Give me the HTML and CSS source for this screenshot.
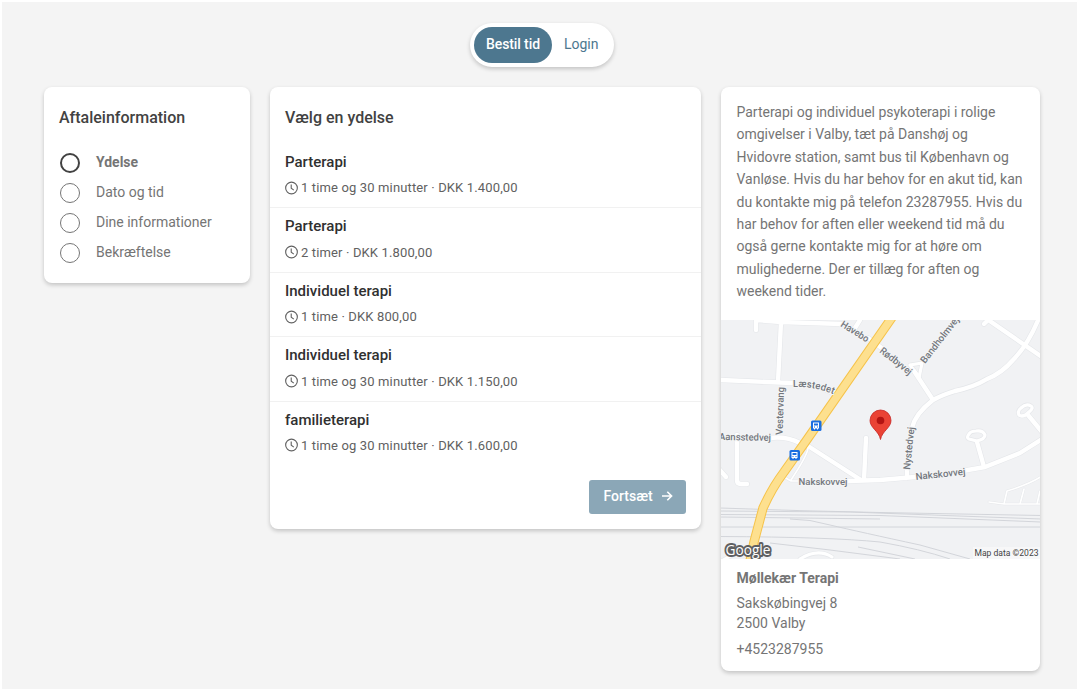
FILE: index.html
```html
<!DOCTYPE html>
<html lang="da">
<head>
<meta charset="utf-8">
<title>Bestil tid</title>
<link rel="stylesheet" href="styles.css">
</head>
<body>
<svg class="defs" aria-hidden="true"><symbol id="clock" viewBox="0 0 14 14"><circle cx="7" cy="7" r="6.3"/><path d="M6.700 3.200V7.300L9.500 9.300"/></symbol></svg>
<nav class="tabs"><a class="tab active">Bestil tid</a><a class="tab">Login</a></nav>
<main class="columns">
  <aside class="card steps">
    <h2>Aftaleinformation</h2>
    <ul>
      <li class="current"><i></i><span>Ydelse</span></li>
      <li><i></i><span>Dato og tid</span></li>
      <li><i></i><span>Dine informationer</span></li>
      <li><i></i><span>Bekræftelse</span></li>
    </ul>
  </aside>
  <section class="card services">
    <h2>Vælg en ydelse</h2>
    <div class="service"><h3>Parterapi</h3><p><svg><use href="#clock"/></svg><span>1 time og 30 minutter · DKK 1.400,00</span></p></div>
    <div class="service"><h3>Parterapi</h3><p><svg><use href="#clock"/></svg><span>2 timer · DKK 1.800,00</span></p></div>
    <div class="service"><h3>Individuel terapi</h3><p><svg><use href="#clock"/></svg><span>1 time · DKK 800,00</span></p></div>
    <div class="service"><h3>Individuel terapi</h3><p><svg><use href="#clock"/></svg><span>1 time og 30 minutter · DKK 1.150,00</span></p></div>
    <div class="service"><h3>familieterapi</h3><p><svg><use href="#clock"/></svg><span>1 time og 30 minutter · DKK 1.600,00</span></p></div>
    <div class="actions"><button><span>Fortsæt</span><svg viewBox="0 0 12 12"><path d="M1 6H10.5M6.3 1.7L10.6 6L6.3 10.3"/></svg></button></div>
  </section>
  <aside class="card about">
    <p class="intro">Parterapi og individuel psykoterapi i rolige omgivelser i Valby, tæt på Danshøj og Hvidovre station, samt bus til København og Vanløse. Hvis du har behov for en akut tid, kan du kontakte mig på telefon 23287955. Hvis du har behov for aften eller weekend tid må du også gerne kontakte mig for at høre om mulighederne. Der er tillæg for aften og weekend tider.</p>
    <svg class="map" viewBox="1 0 319 239">
      <defs>
        <g id="roads">
          <path d="M36 0L61 2L122 4M36 1V10M61 2L58 62M0 60L72 63M98 66L115 74M140 0L135 8M148 18L163 29M17 115V160Q17 164 21 164H27M-1 149L6 157M50 118Q66 116 80 123L88 126L141 160M146 118L144 160M128 161L160 160L195 157M242 151L265 147L300 133L322 119M257 122L264 147M187 150V158M192 108Q195 94 213 80L194 51M213 80Q222 75 235 71Q254 67 267 59Q282 53 293 40Q308 25 319 -2M264 -3L322 37M264 4L272 -4M308 95L322 112"/>
          <path class="narrow" d="M190 45L202 43L199 58M190 45L198 56M257 121L249 119Q246 118 249 114Q251 111 256 111Q263 110 265 115Q265 119 257 121M299 95Q297 91 301 88Q306 83 311 86Q314 88 309 92Q303 98 299 95M80 239Q98 228 112 237M0 242Q20 230 35 225"/>
          <path class="thin" d="M88 127Q89 133 71 160M64 157L71 161L80 161M269 182L284 184H322M284 184L287 171Q310 164 322 156M300 184L304 169M317 184L320 171"/>
        </g>
        <path id="laestedet" d="M73 67Q95 66 115 75"/>
        <g id="bus"><rect x="-5" y="-5" width="10.500" height="10.500" rx="1.500" fill="#1b6fe0"/><path fill="#fff" fill-rule="evenodd" d="M-3 -3H3V3H2V4H1V3H-1V4H-2V3H-3ZM-2 -2V0H2V-2ZM-2 1V2H-1V1ZM1 1V2H2V1Z"/></g>
      </defs>
      <rect x="1" width="319" height="239" fill="#f1f2f4"/>
      <use href="#roads" class="road-edge"/>
      <use href="#roads" class="road"/>
      <path class="rails" d="M0 188Q80 191 160 192.500L321 195.500M0 191L130 192L321 199M0 194.500L160 195.500L321 202M0 197L160 199M0 207H321M0 216.500Q110 217 160 222Q200 229 230 239M70 199Q90 199 110 205Q140 212 200 225L250 239M50 223L110 230L180 239M138 227L195 239"/>
      <path class="highway-edge" d="M173 -4L86 121L64 152Q52 168 43 188L34 222L30 241"/>
      <path class="highway" d="M173 -4L86 121L64 152Q52 168 43 188L34 222L30 241"/>
      <g class="labels">
        <text transform="translate(120 6) rotate(32)" textLength="31" lengthAdjust="spacingAndGlyphs">Havebo</text>
        <text transform="translate(159 32) rotate(38)" textLength="38" lengthAdjust="spacingAndGlyphs">Rødbyvej</text>
        <text transform="translate(205 44) rotate(-52)" textLength="56" lengthAdjust="spacingAndGlyphs">Bandholmvej</text>
        <text><textPath href="#laestedet">Læstedet</textPath></text>
        <text transform="translate(62.500 115) rotate(-88)" textLength="48" lengthAdjust="spacingAndGlyphs">Vestervang</text>
        <text transform="translate(-1 120) rotate(1)" textLength="52" lengthAdjust="spacingAndGlyphs">Aansstedvej</text>
        <text transform="translate(190 150) rotate(-84)" textLength="43" lengthAdjust="spacingAndGlyphs">Nystedvej</text>
        <text x="78.500" y="165" textLength="49" lengthAdjust="spacingAndGlyphs">Nakskovvej</text>
        <text transform="translate(196 160) rotate(-6)" textLength="50" lengthAdjust="spacingAndGlyphs">Nakskovvej</text>
      </g>
      <use href="#bus" x="96" y="105.500"/>
      <use href="#bus" x="74.500" y="135"/>
      <path d="M160.500 119.500C159 111 150 108 150 100.500A10.500 10.500 0 0 1 171 100.500C171 108 162 111 160.500 119.500Z" fill="#ea4335" stroke="#c5221f" stroke-width=".8"/>
      <circle cx="160.500" cy="100.500" r="3.800" fill="#b31412"/>
      <text class="google" x="5.500" y="234.500" textLength="45" lengthAdjust="spacingAndGlyphs">Google</text>
      <rect x="253" y="227" width="67" height="12" fill="#f7f7f8"/>
      <text class="credit" x="254.500" y="236" textLength="64" lengthAdjust="spacingAndGlyphs">Map data ©2023</text>
    </svg>
    <address><strong>Møllekær Terapi</strong><span>Sakskøbingvej 8<br>2500 Valby</span><span class="phone">+4523287955</span></address>
  </aside>
</main>
</body>
</html>
```
FILE: styles.css
```css
* { box-sizing: border-box; }
html { background: #fff; }
body { margin: 0; height: 689px; overflow: hidden; border: solid #fff; border-width: 2px 0 0 2px; background: #f4f4f4; background-clip: padding-box; font: 14px/20px Roboto, sans-serif; color: #757575; }
h2, h3, p, ul { margin: 0; padding: 0; }
.defs { display: none; }
.tabs { display: flex; width: 144px; height: 44px; margin: 21px 0 20px 468px; padding: 4px; border-radius: 22px; background: #fff; box-shadow: 0 2px 4px rgba(0,0,0,.2); }
.tab { height: 36px; padding: 0 12px; line-height: 35px; color: #4d778f; border-radius: 18px; white-space: nowrap; }
.tab.active { width: 78px; background: #4d778f; color: #fff; font-weight: 500; letter-spacing: -.1px; }
.columns { display: grid; grid-template-columns: 206px 431px 319px; gap: 20px; align-items: start; margin-left: 42px; }
.card { background: #fff; border-radius: 8px; box-shadow: 0 2px 4px rgba(0,0,0,.2); overflow: hidden; }
h2 { font-size: 16px; line-height: 20px; font-weight: 500; color: #424242; }
.steps { height: 196px; padding: 21px 15px; }
.steps ul { margin-top: 19px; list-style: none; }
.steps li { display: flex; align-items: center; gap: 16px; height: 30px; padding-left: 1px; }
.steps i { width: 20px; height: 20px; margin-top: 2px; border: 1px solid #757575; border-radius: 50%; }
.steps .current { font-weight: 700; }
.steps .current i { border: 2px solid #424242; }
.services { height: 442px; }
.services h2 { padding: 21px 15px 16px; }
.service { height: 64.4px; padding: 7px 15px 0; border-bottom: 1px solid #f1f1f1; }
.service:nth-of-type(5) { border: 0; }
h3 { font-size: 15px; line-height: 22px; font-weight: 500; color: #303030; }
.service p { display: flex; align-items: center; gap: 3px; margin-top: 5.4px; font-size: 13px; line-height: 19px; letter-spacing: .14px; color: #616161; }
.service svg { width: 13px; height: 14px; fill: none; stroke: #616161; stroke-width: 1.2; }
.actions { display: flex; justify-content: flex-end; padding: 14px 15px 0; }
button { display: flex; align-items: center; gap: 8px; width: 97px; height: 34px; padding: 0 13px 2px 14.5px; border: 0; border-radius: 3px; background: #8ba7b7; color: #fff; font: 500 14px Roboto, sans-serif; }
button svg { width: 12px; height: 12px; fill: none; stroke: #fff; stroke-width: 1.6; }
.about { height: 584px; }
.intro { height: 233px; padding: 14px 14px 0 15.5px; line-height: 22.4px; letter-spacing: -.01px; }
.map { display: block; width: 319px; height: 239px; font-family: Roboto, sans-serif; }
.map path { stroke-linejoin: round; }
.road-edge, .road { fill: none; stroke-linecap: round; }
.road-edge { --narrow: 4.4px; --thin: 2.6px; stroke: #e5e7ea; stroke-width: 5.6px; }
.road { --narrow: 3.2px; --thin: 1.7px; stroke: #fff; stroke-width: 4.4px; }
.narrow { stroke-width: var(--narrow); }
.thin { stroke-width: var(--thin); }
.rails { fill: none; stroke: #cfd1d7; stroke-width: .9; }
.highway-edge, .highway { fill: none; stroke: #f6c34a; stroke-width: 9.4; }
.highway { stroke: #fde08f; stroke-width: 7.4; }
.labels { font-size: 9.8px; font-weight: 500; fill: #73777d; stroke: #f4f5f6; stroke-width: 2px; paint-order: stroke; }
.google { font: 500 15px "Open Sans", sans-serif; fill: #fff; stroke: #5f6062; stroke-width: 4px; stroke-linejoin: round; paint-order: stroke; }
.credit { font-size: 9.5px; fill: #444; }
address { display: flex; flex-direction: column; padding: 9px 15.5px; font-style: normal; }
address strong { margin-bottom: 5px; }
.phone { margin-top: 6px; }
```
